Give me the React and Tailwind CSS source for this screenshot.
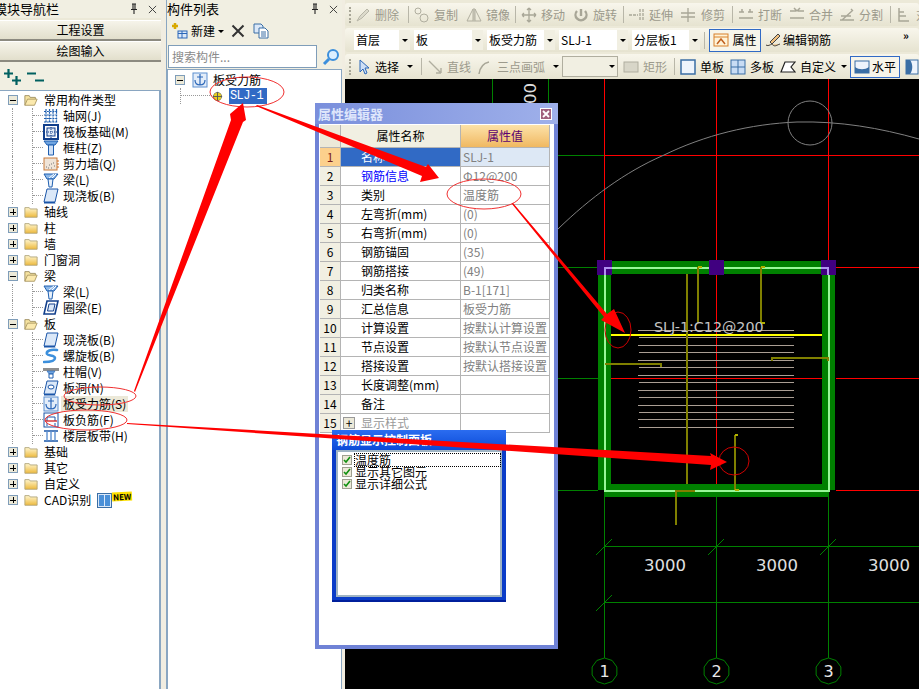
import { Fragment } from 'react'

// Small line drawings used in the tree and the toolbars
const Svg = ({ children, className = 'w-4 h-4' }) => (
  <svg viewBox="0 0 16 16" className={`${className} shrink-0`} fill="none">{children}</svg>
)

const treeIcons = {
  grid: (
    <Svg>
      <path d="M3 1v14M6.500 1v14M10 1v14M13.500 1v14M1 3.500h14M1 7h14M1 10.500h14M1 14h14" stroke="#1f5fb0" strokeWidth="1.2" strokeDasharray="2 .8" />
    </Svg>
  ),
  raft: (
    <Svg>
      <rect x="1" y="1" width="14" height="14" fill="#fff" stroke="#123f8c" strokeWidth="2" />
      <rect x="4" y="4" width="8" height="8" fill="#dfe9f7" stroke="#123f8c" />
      <path d="M8 1v14M1 8h14" stroke="#123f8c" strokeDasharray="1 1" />
    </Svg>
  ),
  column: (
    <Svg>
      <path d="M1 1h14l-3 4H4z" fill="#6fa4e0" stroke="#1f5fb0" />
      <path d="M5.500 5h5v10h-5z" fill="#cfe0f6" stroke="#1f5fb0" />
    </Svg>
  ),
  wall: (
    <Svg>
      <rect x="1" y="2" width="13" height="12" fill="#efe4d8" stroke="#c87a3a" />
      <path d="M3 11h1M6 9h1M8 12h1M10 7h1M5 12h1M11 10h1M8 8h1" stroke="#777" />
      <path d="M14 5h2M14 8h2M14 11h2" stroke="#d06a20" />
    </Svg>
  ),
  beam: (
    <Svg>
      <path d="M1 2h14l-4 5H4z" fill="#8db8e8" stroke="#1f5fb0" />
      <path d="M5 7h5l-1 8H6z" fill="#e8f1fb" stroke="#1f5fb0" />
      <path d="M6 6l5-4M9 6l4-4" stroke="#fff" />
    </Svg>
  ),
  slab: (
    <Svg>
      <path d="M4 1h11l-3 13H1z" fill="#dbe8f8" stroke="#1a55a8" />
      <path d="M1 14h11l.5 1.500H1z" fill="#1a55a8" />
    </Svg>
  ),
  ring: (
    <Svg>
      <path d="M4 1h11l-3 13H1z" fill="#fff" stroke="#123f8c" strokeWidth="1.600" />
      <path d="M6 4h6l-1.500 7H4.500z" fill="#dbe8f8" stroke="#123f8c" />
    </Svg>
  ),
  spiral: (
    <Svg>
      <path d="M14 2C8 1 3 3 4 6c1 2 8 1 8 4s-6 4-11 4" stroke="#3c8fdc" strokeWidth="2.600" strokeLinecap="round" />
    </Svg>
  ),
  cap: (
    <Svg>
      <rect x="0" y="4" width="16" height="3" fill="#8f8f8f" />
      <path d="M4 7h8l-2 3H6z" fill="#6fa4e0" stroke="#1f5fb0" strokeWidth=".6" />
      <path d="M6 10h4v4H6z" fill="#fff" stroke="#1f5fb0" />
    </Svg>
  ),
  hole: (
    <Svg>
      <path d="M4 1h11l-3 13H1z" fill="#dbe8f8" stroke="#1a55a8" />
      <ellipse cx="8" cy="7" rx="3" ry="2" fill="#fff" stroke="#1a55a8" />
      <path d="M1 14h11l.5 1.500H1z" fill="#1a55a8" />
    </Svg>
  ),
  rebar: (
    <Svg>
      <rect x="1" y="1" width="14" height="14" fill="#e3edf9" stroke="#5c8fd0" />
      <path d="M8 2v11M3 8c0 3 2 5 5 5s5-2 5-5" stroke="#2a66b8" strokeWidth="1.200" />
      <path d="M5 5h6" stroke="#2a66b8" />
    </Svg>
  ),
  negative: (
    <Svg>
      <rect x="1" y="1" width="14" height="14" fill="#fff" stroke="#1a55a8" />
      <path d="M4 9V5h8v4" stroke="#1a55a8" />
      <path d="M2 9h12" stroke="#d02020" strokeWidth="1.300" />
      <path d="M4 11v3M12 11v3" stroke="#1a55a8" />
    </Svg>
  ),
  strip: (
    <Svg>
      <path d="M1 3h14M1 13h14" stroke="#1a55a8" strokeWidth="1.600" />
      <path d="M4 3v10M8 3v10M12 3v10" stroke="#5c8fd0" strokeWidth="1.400" />
    </Svg>
  ),
}

const FolderIcon = ({ open }) => (
  <Svg className="w-4 h-[14px]">
    {open ? (
      <>
        <path d="M1 14V3h5l1 2h6v2" fill="#f6e3a0" stroke="#9a8a5a" />
        <path d="M1 14l3-7h11l-3 7z" fill="#fbe9ad" stroke="#a89660" />
      </>
    ) : (
      <>
        <path d="M1 3h5l1 1.500h8V14H1z" fill="url(#folder)" stroke="#b0a478" />
        <defs>
          <linearGradient id="folder" x1="0" y1="0" x2="0" y2="1">
            <stop offset="0" stopColor="#fff6cf" />
            <stop offset="1" stopColor="#edb93c" />
          </linearGradient>
        </defs>
      </>
    )}
  </Svg>
)

const ExpandBox = ({ open }) => (
  <div className="w-[10px] h-[10px] border border-[#7f9db9] bg-[#ece9d8] flex items-center justify-center relative shrink-0">
    <div className="w-[6px] h-px bg-black" />
    {!open && <div className="absolute w-px h-[6px] bg-black" />}
  </div>
)

const tree = [
  { label: '常用构件类型', open: true, items: [['grid', '轴网(J)'], ['raft', '筏板基础(M)'], ['column', '框柱(Z)'], ['wall', '剪力墙(Q)'], ['beam', '梁(L)'], ['slab', '现浇板(B)']] },
  { label: '轴线' },
  { label: '柱' },
  { label: '墙' },
  { label: '门窗洞' },
  { label: '梁', open: true, items: [['beam', '梁(L)'], ['ring', '圈梁(E)']] },
  { label: '板', open: true, items: [['slab', '现浇板(B)'], ['spiral', '螺旋板(B)'], ['cap', '柱帽(V)'], ['hole', '板洞(N)'], ['rebar', '板受力筋(S)', true], ['negative', '板负筋(F)'], ['strip', '楼层板带(H)']] },
  { label: '基础' },
  { label: '其它' },
  { label: '自定义' },
  { label: 'CAD识别', isNew: true },
]

const TreeGroup = ({ group }) => (
  <>
    <div className="h-4 flex items-center">
      <div className="w-[8px] shrink-0" />
      <ExpandBox open={group.open} />
      <div className="w-[5px] shrink-0" />
      <FolderIcon open={group.open} />
      <span className="ml-[5px] whitespace-nowrap">{group.label}</span>
      {group.isNew && (
        <>
          <div className="ml-[6px] w-[15px] h-[15px] border border-[#3a6ea5] bg-[#dbe8f8] flex gap-px justify-center items-center">
            <div className="w-[5px] h-[11px] bg-[#4a90d8]" />
            <div className="w-[5px] h-[11px] bg-[#4a90d8]" />
          </div>
          <span className="self-start bg-[#ffe000] text-[8px] leading-[9px] font-bold text-black px-px -rotate-3">NEW</span>
        </>
      )}
    </div>
    {group.items?.map(([icon, text, active]) => (
      <div key={text} className="h-4 flex items-center">
        <div className="ml-[12px] w-[20px] h-4 border-l border-dotted border-[#999] shrink-0" />
        <div className="w-[11px] h-4 shrink-0 border-l border-dotted border-[#999] flex flex-col">
          <div className="h-[8px] border-b border-dotted border-[#999]" />
        </div>
        {treeIcons[icon]}
        <span className={`ml-[2px] pl-[2px] pr-[2px] leading-4 whitespace-nowrap ${active ? 'bg-[#ece9d8]' : ''}`}>{text}</span>
      </div>
    ))}
  </>
)

const PanelTitle = ({ title, className = '' }) => (
  <div className="h-[18px] flex items-center bg-[#f1efe2] text-[13px] overflow-hidden shrink-0">
    <span className={`whitespace-nowrap flex-1 ${className}`}>{title}</span>
    <svg viewBox="0 0 10 12" className="w-[10px] h-3 mr-[9px]">
      <path d="M3 1h4M4 1v5M6 1v5M2 6.500h6M5 7v4" stroke="#222" strokeWidth="1.100" fill="none" />
    </svg>
    <svg viewBox="0 0 10 10" className="w-[9px] h-[9px] mr-[4px]">
      <path d="M1 1l8 8M9 1l-8 8" stroke="#333" />
    </svg>
  </div>
)

const NavButton = ({ children }) => (
  <div className="h-[21px] flex items-center justify-center border-t border-white border-b-2 border-b-[#8c8a80] bg-gradient-to-b from-[#f6f4ea] to-[#e2dfcc]">
    {children}
  </div>
)

const LeftPanel = () => (
  <div className="w-[161px] flex flex-col shrink-0 bg-[#ece9d8] overflow-hidden">
    <PanelTitle title="模块导航栏" className="-ml-[6px]" />
    <div className="h-[2px] shrink-0" />
    <NavButton>工程设置</NavButton>
    <NavButton>绘图输入</NavButton>
    <div className="h-[28px] shrink-0 flex items-center pl-[4px] pt-[2px] gap-[6px] bg-[#f1efe2]">
      <svg viewBox="0 0 17 16" className="w-[17px] h-4">
        <path d="M0 4.500h9M4.500 0v9M8 11.500h9M12.500 7v9" stroke="#006060" strokeWidth="2.200" fill="none" />
      </svg>
      <svg viewBox="0 0 17 16" className="w-[17px] h-4">
        <path d="M0 4.500h9M8 11.500h9" stroke="#006060" strokeWidth="2.200" fill="none" />
      </svg>
    </div>
    <div className="flex-1 bg-white border-t border-r-2 border-[#8aa6c1] pt-px">
      {tree.map((g, i) => <TreeGroup key={i} group={g} />)}
    </div>
  </div>
)

const MiddlePanel = () => (
  <div className="w-[175px] flex flex-col shrink-0 bg-[#ece9d8] overflow-hidden">
    <PanelTitle title="构件列表" />
    <div className="h-[26px] shrink-0 flex items-center pl-[5px] bg-[#f1efe2]">
      <svg viewBox="0 0 16 16" className="w-4 h-4">
        <path d="M3 0v6M0 3h6" stroke="#d8a800" strokeWidth="2.500" />
        <rect x="6" y="8" width="9" height="7" fill="#dbe8f8" stroke="#2a66b8" />
        <path d="M6 10.500h9M10 8v7" stroke="#2a66b8" />
      </svg>
      <span className="ml-[3px]">新建</span>
      <div className="ml-[3px] border-x-[3px] border-x-transparent border-t-[3px] border-t-black" />
      <svg viewBox="0 0 14 14" className="ml-[7px] w-[14px] h-[14px]">
        <path d="M1.500 1.500l11 11M12.500 1.500l-11 11" stroke="#333" strokeWidth="2" />
      </svg>
      <svg viewBox="0 0 16 16" className="ml-[8px] w-4 h-4">
        <path d="M1 1h7l2 2v7H1z" fill="#dbe8f8" stroke="#3a6ea5" />
        <path d="M6 5h6l3 3v7H6z" fill="#fff" stroke="#3a6ea5" />
        <path d="M8 9h5M8 11h5M8 13h5" stroke="#3a6ea5" />
      </svg>
    </div>
    <div className="h-[25px] shrink-0 flex items-center gap-[3px] bg-[#f1efe2] pl-px">
      <div className="w-[149px] h-[23px] bg-white border border-[#7f9db9] flex items-center pl-[3px] text-[#8a8a8a]">搜索构件...</div>
      <svg viewBox="0 0 20 20" className="w-5 h-5 ml-[1px]">
        <circle cx="12" cy="8" r="5" fill="#dcefff" stroke="#3c8fdc" strokeWidth="2" />
        <path d="M8 12l-5 5" stroke="#3c8fdc" strokeWidth="3" />
      </svg>
    </div>
    <div className="flex-1 bg-white border-t border-x border-[#8aa6c1] pt-[2px]">
      <div className="h-4 flex items-center pl-[7px]">
        <ExpandBox open />
        <div className="w-[7px]" />
        {treeIcons.rebar}
        <span className="ml-[5px]">板受力筋</span>
      </div>
      <div className="h-4 flex items-center pl-[12px]">
        <div className="w-[32px] h-4 flex flex-col shrink-0 border-l border-dotted border-[#999]">
          <div className="h-[8px] border-b border-dotted border-[#999]" />
        </div>
        <svg viewBox="0 0 12 12" className="w-[11px] h-[11px] shrink-0">
          <circle cx="6" cy="6" r="4.500" fill="#e8d020" stroke="#555" strokeDasharray="1.500 .8" />
          <path d="M6 1v10M1 6h10" stroke="#555" />
        </svg>
        <span className="ml-[6px] px-[1px] w-[38px] leading-4 bg-[#316ac5] text-white font-['Liberation_Mono',monospace] tracking-[-.6px]">SLJ-1</span>
      </div>
    </div>
  </div>
)

const toolIcons = {
  brush: <path d="M2 14l3-5 7-7 2 2-7 7z" stroke="#b8b6a8" fill="#dcdacb" />,
  copy: <><circle cx="4" cy="4" r="3" stroke="#b0ae9f" /><circle cx="10" cy="11" r="4" stroke="#b0ae9f" /></>,
  mirror: <path d="M7 2v12L1 14zM9 2v12l6 0zM8 1v14" stroke="#b0ae9f" />,
  move: <path d="M8 1v14M1 8h14M8 1L6 3M8 1l2 2M8 15l-2-2M8 15l2-2M1 8l2-2M1 8l2 2M15 8l-2-2M15 8l-2 2" stroke="#a8a697" strokeWidth="1.300" />,
  rotate: <path d="M4 4a5.500 5.500 0 1 0 8 0M8 2v7" stroke="#a8a697" strokeWidth="2.400" />,
  extend: <path d="M0 8h9M11 2v12M14 2v12" stroke="#a8a697" strokeDasharray="3 1" strokeWidth="1.300" />,
  trim: <path d="M0 6h14M0 10h14M7 1v14" stroke="#a8a697" strokeWidth="1.300" />,
  breakLine: <path d="M1 5h5M10 5h5M1 11h14M4 2v3M12 2v3" stroke="#a8a697" strokeWidth="1.500" />,
  merge: <path d="M1 4h6M9 4h6M1 11h14M5 1l3 3M11 1L8 4" stroke="#a8a697" strokeWidth="1.500" />,
  split: <path d="M1 13h14M3 13l10-9M2 9h10M12 2l2 2" stroke="#a8a697" strokeWidth="1.400" />,
  last: <path d="M3 1v13h10M3 5h5M3 9h7" stroke="#a8a697" strokeWidth="1.500" />,
  attr: <><rect x="1" y="2" width="14" height="12" fill="#fff3d8" stroke="#d8802a" /><path d="M1 5h14" stroke="#d8802a" /><path d="M4 12l4-5 4 5" stroke="#c06020" strokeWidth="1.500" /></>,
  edit: <path d="M1 13c3 2 5-2 7 0s4 0 7-1M5 10l8-8 2 2-8 8z" stroke="#444" fill="#f0c080" />,
  pointer: <path d="M5 1v12l3-3 2 5 2-1-2-5h4z" fill="#cfe0f6" stroke="#2a66b8" />,
  line: <path d="M2 2l12 12M14 14h-5M14 14V9" stroke="#b0ae9f" strokeWidth="1.400" />,
  arc: <path d="M2 15C3 8 7 4 12 3" stroke="#a8a697" strokeWidth="1.500" />,
  rect: <rect x="1" y="3" width="14" height="10" fill="#d8d6c8" stroke="#b0ae9f" />,
  single: <rect x="1" y="1" width="14" height="14" fill="#eef4fc" stroke="#3a6ea5" strokeWidth="1.500" />,
  multi: <><rect x="1" y="1" width="14" height="14" fill="#c8dcf4" stroke="#3a6ea5" /><path d="M8 1v14M1 8h14" stroke="#3a6ea5" /></>,
  custom: <path d="M5 3h10l-4 5 4 5H1z" fill="#fff" stroke="#222" strokeWidth="1.200" />,
  level: <><rect x="1" y="2" width="14" height="12" fill="#eef4fc" stroke="#3a6ea5" /><path d="M1 8c4 3 10 3 14 0v6H1z" fill="#3a6ea5" /></>,
  vertical: <><rect x="2" y="1" width="12" height="14" fill="#eef4fc" stroke="#3a6ea5" /><path d="M6 1c3 4 3 10 0 14H2V1z" fill="#3a6ea5" /></>,
}

const ToolIcon = ({ name }) => (
  <svg viewBox="0 0 16 16" className="w-4 h-4 shrink-0" fill="none">{toolIcons[name]}</svg>
)

const Grip = () => <div className="w-[2px] h-[16px] mr-[4px] border-l-2 border-dotted border-[#a8a697] shrink-0" />
const Sep = () => <div className="w-px h-[17px] bg-[#b8b6a8] mr-[5px] shrink-0" />
const Caret = ({ className = '' }) => (
  <div className={`border-x-[3px] border-x-transparent border-t-[3px] border-t-black shrink-0 ${className}`} />
)

const Tool = ({ icon, label, width, gray }) => (
  <div className={`flex items-center gap-[4px] whitespace-nowrap shrink-0 ${width} ${gray ? 'text-[#9c9a8c]' : 'text-black'}`}>
    <ToolIcon name={icon} />
    <span>{label}</span>
  </div>
)

const Band = ({ children, className = '' }) => (
  <div className={`flex items-center rounded-[3px] bg-gradient-to-b from-[#f8f6ec] to-[#e6e3d0] overflow-hidden ${className}`}>
    {children}
  </div>
)

const Select = ({ label, width }) => (
  <div className={`h-[20px] flex items-center bg-white shrink-0 ${width}`}>
    <span className="flex-1 pl-[2px] whitespace-nowrap overflow-hidden">{label}</span>
    <div className="w-[11px] h-full bg-[#f1efe2] flex items-center justify-center">
      <Caret />
    </div>
  </div>
)

const Toolbars = () => (
  <div className="h-[79px] shrink-0 bg-[#ece9d8] flex flex-col pt-[3px] gap-[2px]">
    <Band className="h-[23px] pl-[4px]">
      <Grip />
      <Tool gray icon="brush" label="删除" width="w-[53px]" />
      <Sep />
      <Tool gray icon="copy" label="复制" width="w-[52px]" />
      <Tool gray icon="mirror" label="镜像" width="w-[49px]" />
      <Sep />
      <Tool gray icon="move" label="移动" width="w-[52px]" />
      <Tool gray icon="rotate" label="旋转" width="w-[50px]" />
      <Sep />
      <Tool gray icon="extend" label="延伸" width="w-[52px]" />
      <Tool gray icon="trim" label="修剪" width="w-[51px]" />
      <Sep />
      <Tool gray icon="breakLine" label="打断" width="w-[51px]" />
      <Tool gray icon="merge" label="合并" width="w-[50px]" />
      <Tool gray icon="split" label="分割" width="w-[51px]" />
      <Sep />
      <Tool gray icon="last" label="对" width="w-[30px]" />
    </Band>
    <Band className="h-[24px] pl-[9px] gap-[4px]">
      <Select label="首层" width="w-[56px]" />
      <Select label="板" width="w-[69px]" />
      <Select label="板受力筋" width="w-[68px]" />
      <Select label="SLJ-1" width="w-[69px]" />
      <Select label="分层板1" width="w-[68px]" />
      <div className="w-px h-[17px] bg-[#b8b6a8] shrink-0" />
      <div className="w-[52px] h-[23px] flex items-center justify-center gap-[3px] border border-[#316ac5] bg-[#f7f5ea] shrink-0">
        <ToolIcon name="attr" />
        <span>属性</span>
      </div>
      <div className="flex items-center gap-[2px] whitespace-nowrap">
        <ToolIcon name="edit" />
        <span>编辑钢筋</span>
      </div>
      <span className="ml-[68px] self-start mt-[2px] text-[11px] leading-none font-bold">»</span>
    </Band>
    <Band className="h-[25px] pl-[4px]">
      <Grip />
      <Tool icon="pointer" label="选择" width="w-[52px]" />
      <Caret className="mr-[8px]" />
      <Sep />
      <Tool gray icon="line" label="直线" width="w-[50px]" />
      <Tool gray icon="arc" label="三点画弧" width="w-[76px]" />
      <Caret className="mr-[3px] border-t-[#9c9a8c]" />
      <div className="w-[56px] h-[21px] border border-[#b0ae9f] bg-[#f1efe2] flex items-center justify-end pr-[2px] mr-[5px] shrink-0">
        <Caret className="border-t-[#9c9a8c]" />
      </div>
      <Tool gray icon="rect" label="矩形" width="w-[51px]" />
      <Sep />
      <Tool icon="single" label="单板" width="w-[50px]" />
      <Tool icon="multi" label="多板" width="w-[50px]" />
      <Tool icon="custom" label="自定义" width="w-[61px]" />
      <Caret className="mr-[3px]" />
      <div className="w-[50px] h-[22px] flex items-center justify-center gap-[2px] border border-[#316ac5] bg-[#f7f5ea] shrink-0">
        <ToolIcon name="level" />
        <span>水平</span>
      </div>
      <div className="ml-[4px]">
        <ToolIcon name="vertical" />
      </div>
    </Band>
  </div>
)

const tanLines = [330, 337, 345, 352, 360, 367, 375, 382, 390, 397, 405, 412, 419, 427]
const axes = [[604.5, '1'], [716.5, '2'], [828.5, '3']]

// Octagon-ish axis bubble outline
const bubble = (cx, cy, r) =>
  Array.from({ length: 10 }, (_, i) => {
    const a = (Math.PI * 2 * i) / 10 - Math.PI / 2
    return `${cx + r * Math.cos(a)},${cy + r * Math.sin(a)}`
  }).join(' ')

const Drawing = () => (
  <svg viewBox="345 79 574 610" className="w-full h-full block" fill="none" shapeRendering="crispEdges">
    {/* axis lines */}
    <path d="M492.500 79V103M548.500 79V103" stroke="#008000" />
    <path d="M557 155.500H604M557 267.500H598M557 378.500H598M557 490.500H598" stroke="#008000" />
    <path d="M604.500 79V262M716.500 79V262M828.500 79V262M716.500 275V490M604 155.500H919M611 378.500H822M836 267.500H919M836 378.500H919M836 490.500H919" stroke="#ff0000" />
    <path d="M604.500 490V658M716.500 490V658M828.500 490V658M604 546.500H919M604 602.500H919" stroke="#008000" />
    <g shapeRendering="auto">
      <path d="M596 555L612 539M708 555L724 539M820 555L836 539M596 611L612 595" stroke="#008000" />
      {/* arc and small circle */}
      <path d="M558 229C590 198 625 172 663 155.500C705 135 750 124 797 122C840 121 880 128 919 139" stroke="#808080" />
      <circle cx="810" cy="123" r="22" stroke="#808080" />
      {axes.map(([x, n]) => (
        <Fragment key={n}>
          <polygon points={bubble(x, 671, 13)} stroke="#008000" />
          <text x={x} y="677" textAnchor="middle" fill="#e8e8e8" fontSize="16" fontFamily="DejaVu Sans">{n}</text>
        </Fragment>
      ))}
      {[665, 777, 889].map((x) => (
        <text key={x} x={x} y="571" textAnchor="middle" fill="#e0e0e0" fontSize="16.500" fontFamily="DejaVu Sans">3000</text>
      ))}
      <text transform="translate(536 125) rotate(-90)" fill="#e0e0e0" fontSize="16.500" fontFamily="DejaVu Sans">3000</text>
    </g>
    {/* walls */}
    <path d="M598 261H835V490H822V274H611V490H598Z" fill="#008000" />
    <rect x="604" y="484" width="224" height="13" fill="#008000" />
    <path d="M605 267.500H828.500V490.500H604.500V267.500" stroke="#98f898" strokeWidth="2" />
    {/* rebar */}
    {tanLines.map((y, i) => (
      <path key={y} d={`M${i % 2 ? 639 : 638} ${y + 0.5}H794`} stroke="#aa9e94" />
    ))}
    <path d="M611 335H822" stroke="#ffff00" strokeWidth="2" />
    <path d="M687 274V484M698 267V323M761 267V323M605 364H661V367M772 361V358H828V361M735 435V490M676 525V491H695" stroke="#808000" strokeWidth="2" />
    <path d="M698 267H702M761 267H765M761 323H765M735 435H738M735 490H739" stroke="#b0b000" strokeWidth="2" />
    <rect x="597" y="260" width="15" height="15" fill="#400080" />
    <rect x="709" y="260" width="15" height="15" fill="#400080" />
    <rect x="821" y="260" width="15" height="15" fill="#400080" />
    <path d="M612 267.500H605V275M821 267.500H828V275" stroke="#b090f0" strokeWidth="2" />
    <text x="654" y="332" fill="#c4c4c4" fontSize="14.300" fontFamily="DejaVu Sans" shapeRendering="auto">SLJ-1:C12@200</text>
    <ellipse cx="618" cy="330" rx="13" ry="18" stroke="#d00000" shapeRendering="auto" />
    <ellipse cx="734" cy="461" rx="15" ry="14" stroke="#d00000" shapeRendering="auto" />
  </svg>
)

const rows = [
  ['名称', 'SLJ-1'],
  ['钢筋信息', 'Φ12@200'],
  ['类别', '温度筋'],
  ['左弯折(mm)', '(0)'],
  ['右弯折(mm)', '(0)'],
  ['钢筋锚固', '(35)'],
  ['钢筋搭接', '(49)'],
  ['归类名称', 'B-1[171]'],
  ['汇总信息', '板受力筋'],
  ['计算设置', '按默认计算设置'],
  ['节点设置', '按默认节点设置'],
  ['搭接设置', '按默认搭接设置'],
  ['长度调整(mm)', ''],
  ['备注', ''],
]

const cell = 'border-r border-b border-[#b4b4b4] flex items-center'

const PropertyDialog = () => (
  <div className="absolute left-[315px] top-[103px] w-[243px] h-[546px] flex flex-col bg-[#6f82d6] z-10">
    <div className="h-[21px] shrink-0 flex items-center justify-between pl-[3px] pr-[6px] bg-gradient-to-r from-[#7a8fdc] to-[#9fb0ea]">
      <span className="text-[#dfe6fb] text-[13px] font-bold">属性编辑器</span>
      <div className="w-[12px] h-[12px] border border-white bg-[#a0607c] flex items-center justify-center">
        <svg viewBox="0 0 8 8" className="w-2 h-2"><path d="M1 1l6 6M7 1L1 7" stroke="#fff" strokeWidth="1.800" /></svg>
      </div>
    </div>
    <div className="flex-1 mx-[4px] mb-[4px] bg-white pt-px pl-px">
      <div className="grid grid-cols-[21px_120px_89px] grid-rows-[23px] w-[230px] auto-rows-[19px]">
        <div className={`${cell} bg-[#ece9d8]`} />
        <div className={`${cell} bg-[#f1efe2] justify-center`}>属性名称</div>
        <div className={`${cell} bg-gradient-to-b from-[#fce2a8] to-[#f0b860] justify-center text-[#5a0070]`}>属性值</div>
        {rows.map(([name, value], i) => (
          <Fragment key={i}>
            <div className={`${cell} justify-center ${i === 0 ? 'bg-[#fcd08c] text-[#7a2020]' : 'bg-[#f1efe2]'}`}>{i + 1}</div>
            <div className={`${cell} pl-5 ${i === 0 ? 'bg-[#316ac5] text-white' : ''} ${i === 1 ? 'text-[#0000ff]' : ''}`}>{name}</div>
            <div className={`${cell} pl-[2px] text-[#808080] whitespace-nowrap overflow-hidden ${i === 0 ? 'bg-[#dde8f5]' : ''}`}>{value}</div>
          </Fragment>
        ))}
        <div className={`${cell} justify-center bg-[#f1efe2]`}>15</div>
        <div className={`${cell} pl-[2px] text-[#999]`}>
          <div className="w-[12px] h-[12px] border border-[#999] bg-[#ece9d8] flex items-center justify-center text-black leading-none mr-[6px]">+</div>
          显示样式
        </div>
        <div className={cell} />
      </div>
    </div>
  </div>
)

const panelChecks = ['温度筋', '显示其它图元', '显示详细公式']

const ControlPanel = () => (
  <div className="absolute left-[332px] top-[430px] w-[174px] h-[172px] flex flex-col bg-[#0a3cc8] z-20 border-b-2 border-[#001f9c]">
    <div className="h-[20px] shrink-0 flex items-center pl-[4px] bg-gradient-to-b from-[#2a6cf0] to-[#0a4ad8] text-white font-bold">钢筋显示控制面板</div>
    <div className="flex-1 mx-[4px] mb-[3px] border-2 border-[#9fb4c4] bg-white pt-[2px] pl-[4px] leading-3">
      {panelChecks.map((label, i) => (
        <div key={label} className="h-3 flex items-center gap-[3px]">
          <div className="w-[10px] h-[10px] border border-[#a0a090] bg-[#ece9d8] flex items-center justify-center shrink-0">
            <svg viewBox="0 0 8 8" className="w-2 h-2"><path d="M1 4l2 2 4-5" stroke="#109010" strokeWidth="1.600" fill="none" /></svg>
          </div>
          <span className={`flex-1 whitespace-nowrap ${i === 0 ? 'outline-1 outline-dotted outline-black' : ''}`}>{label}</span>
        </div>
      ))}
    </div>
  </div>
)

// Red markup painted over the whole screenshot
const Annotations = () => (
  <svg viewBox="0 0 919 689" className="absolute inset-0 w-[919px] h-[689px] z-30 pointer-events-none" fill="none">
    <g stroke="#f03030">
      <ellipse cx="247" cy="92" rx="37" ry="15" />
      <ellipse cx="100" cy="396" rx="36" ry="9" />
      <ellipse cx="86" cy="420" rx="41" ry="10" />
      <ellipse cx="484" cy="194" rx="37" ry="15" />
    </g>
    <g fill="#ff0000">
      <polygon points="134,391 231,120 230,114 243,103 246,120 243,122 135,392" />
      <polygon points="257,105 426,167 428,164 439,178 420,182 422,176 256,106" />
      <polygon points="513,203 607,314 614,309 625,333 601,320 604,317 512,204" />
      <polygon points="127,423 711,456 710,453 727,462 710,470 711,465 127,424" />
    </g>
  </svg>
)

export default function App() {
  return (
    <div className="relative w-[919px] h-[689px] overflow-hidden flex bg-white text-black text-[12px] leading-[14px] font-['Noto_Sans_CJK_SC','Liberation_Sans',sans-serif]">
      <LeftPanel />
      <div className="w-[6px] shrink-0 bg-[#f1ede1] border-r border-[#8aa6c1]" />
      <MiddlePanel />
      <div className="w-[3px] shrink-0 bg-[#f1ede1]" />
      <div className="flex-1 min-w-0 flex flex-col">
        <Toolbars />
        <div className="flex-1 min-h-0 bg-black">
          <Drawing />
        </div>
      </div>
      <PropertyDialog />
      <ControlPanel />
      <Annotations />
    </div>
  )
}
